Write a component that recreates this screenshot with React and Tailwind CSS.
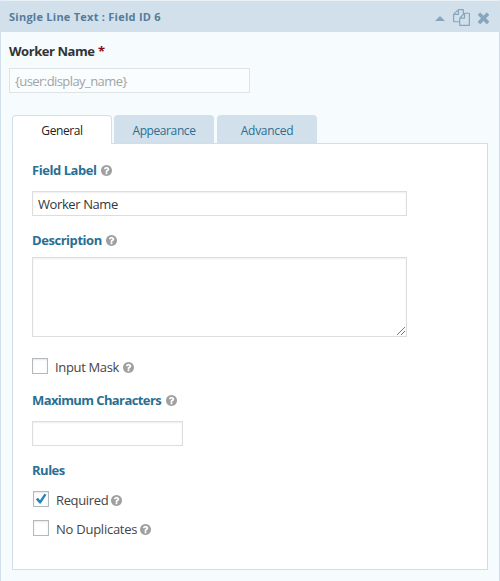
import React from "react";

function Help() {
  return (
    <svg viewBox="128 128 1536 1536" className="h-[11px] w-[11px] shrink-0 fill-[#a0a0a0]">
      <path d="M1024 1376v-192q0-14-9-23t-23-9h-192q-14 0-23 9t-9 23v192q0 14 9 23t23 9h192q14 0 23-9t9-23zm256-672q0-88-55.500-163t-138.500-116-170-41q-243 0-371 213-15 24 8 42l132 100q7 6 19 6 16 0 25-12 53-68 86-92 34-24 86-24 48 0 85.500 26t37.500 59q0 38-20 61t-68 45q-63 28-115.500 86.500t-52.500 125.500v36q0 14 9 23t23 9h192q14 0 23-9t9-23q0-19 21.500-49.500t54.500-49.500q32-18 49-28.500t46-35 44.500-48 28-60.500 12.500-81zm384 192q0 209-103 385.500t-279.500 279.500-385.500 103-385.500-103-279.500-279.500-103-385.500 103-385.500 279.500-279.500 385.500-103 385.500 103 279.500 279.500 103 385.500z" />
    </svg>
  );
}

function Heading({ children, help = true, className }) {
  return (
    <div className={"flex h-5 items-center text-[13px] font-bold text-[#2a6f92] " + className}>
      <span className="relative top-px w-full whitespace-nowrap">{children}</span>
      {help && <Help />}
    </div>
  );
}

function Check({ label, checked, className, labelClass }) {
  return (
    <div className={"flex h-4 items-center text-[13px] text-[#444] " + className}>
      <span className="flex h-4 w-4 shrink-0 items-center justify-center border border-[#b4b9be] bg-white shadow-[inset_0_1px_2px_rgba(0,0,0,0.1)]">
        {checked && (
          <svg viewBox="0 0 12 12" className="h-3 w-3 fill-[#2484b8]">
            <path d="M.8 6.200 3 4.800l2 2.400L9.400.8l2.100.9L5.800 10.400H4.400z" />
          </svg>
        )}
      </span>
      <span className={"relative top-[2px] whitespace-nowrap " + labelClass}>{label}</span>
      <span className="relative top-px"><Help /></span>
    </div>
  );
}

export default function App() {
  return (
    <div className="h-[581px] w-[500px] overflow-hidden border-x border-t border-x-[#d2e0eb] border-t-[#e9f1f7] bg-[#f6fbfe] font-['Open_Sans','Noto_Sans',sans-serif]">
      <header className="flex h-[31px] items-center bg-[#d2e0eb] pl-2">
        <h1 className="relative top-px w-[426px] whitespace-nowrap text-[11px] font-bold tracking-[0.25px] text-[#557b9b]">Single Line Text : Field ID 6</h1>
        <svg viewBox="0 0 10 5" className="mt-[3px] h-[5px] w-[10px] fill-[#88a5be]"><path d="M5 0 10 5H0z" /></svg>
        <svg viewBox="0 0 1792 1792" className="ml-2 mt-[2px] h-[17px] w-[17px] fill-[#88a5be]">
          <path d="M1696 384q40 0 68 28t28 68v1216q0 40-28 68t-68 28h-960q-40 0-68-28t-28-68v-288h-544q-40 0-68-28t-28-68v-672q0-40 20-88t48-76l408-408q28-28 76-48t88-20h416q40 0 68 28t28 68v328q68-40 128-40h416zm-544 213l-299 299h299v-299zm-640-384l-299 299h299v-299zm196 647l316-316v-416h-384v416q0 40-28 68t-68 28h-416v640h512v-256q0-40 20-88t48-76zm956 804v-1152h-384v416q0 40-28 68t-68 28h-416v640h896z" />
        </svg>
        <svg viewBox="302 302 1188 1252" className="ml-2 mt-[2px] h-3 w-[11px] fill-[#88a5be]" preserveAspectRatio="none">
          <path d="M1490 1322q0 40-28 68l-136 136q-28 28-68 28t-68-28l-294-294-294 294q-28 28-68 28t-68-28l-136-136q-28-28-28-68t28-68l294-294-294-294q-28-28-28-68t28-68l136-136q28-28 68-28t68 28l294 294 294-294q28-28 68-28t68 28l136 136q28 28 28 68t-28 68l-294 294 294 294q28 28 28 68z" />
        </svg>
      </header>

      <div className="mt-[10px] flex h-5 items-center pl-2 text-[13px] font-bold tracking-[-0.45px] text-[#333]">
        <span className="w-[89px]">Worker Name</span>
        <span className="text-[#8b0a1a]">*</span>
      </div>
      <div className="ml-2 mt-[6px] flex h-[25px] w-[241px] items-center border border-[#dfe3e5] bg-[#fafdfe] pl-[5px] pt-[3px] text-[13px] tracking-[-0.57px] text-[#a0a4a6]">
        {"{user:display_name}"}
      </div>

      <nav className="ml-[11px] mt-[22px] flex h-7 items-start text-[12px]">
        <div className="relative z-10 flex h-[29px] w-[100px] items-center justify-center rounded-t border border-b-0 border-[#d2e0eb] bg-white pt-[2px] tracking-[-0.4px] text-[#222]">General</div>
        <div className="ml-[2px] flex h-7 w-[100px] items-center justify-center rounded-t bg-[#d2e0eb] pt-[4px] tracking-[-0.4px] text-[#2a6f92]">Appearance</div>
        <div className="ml-[3px] flex h-7 w-[100px] items-center justify-center rounded-t bg-[#d2e0eb] pt-[4px] tracking-[-0.3px] text-[#2a6f92]">Advanced</div>
      </nav>
      <main className="ml-[11px] h-[427px] w-[476px] border border-[#d2dde5] bg-white pl-[19px] pt-4">
        <Heading className="w-20 tracking-[-0.45px]">Field Label</Heading>
        <div className="mt-[11px] flex h-[25px] w-[375px] items-center border border-[#ddd] pl-[5px] pt-[3px] text-[13px] tracking-[-0.4px] text-[#32373c] shadow-[inset_0_1px_2px_rgba(0,0,0,0.07)]">Worker Name</div>
        <Heading className="mt-[14px] w-[85px] tracking-[-0.45px]">Description</Heading>
        <div className="mt-[7px] flex h-20 w-[375px] items-end justify-end border border-[#ddd] p-px shadow-[inset_0_1px_2px_rgba(0,0,0,0.07)]">
          <svg viewBox="0 0 8 8" className="h-2 w-2 fill-none stroke-[#555]" strokeWidth=".8"><path d="M0 8 8 0M4 8 8 4" /></svg>
        </div>
        <Check className="mt-[21px]" label="Input Mask" labelClass="ml-[7px] w-[68px] tracking-[-0.35px]" />
        <Heading className="mt-4 w-[145px] tracking-[-0.6px]">Maximum Characters</Heading>
        <div className="mt-[11px] h-[25px] w-[151px] border border-[#ddd] shadow-[inset_0_1px_2px_rgba(0,0,0,0.07)]" />
        <Heading className="mt-[14px] tracking-[-0.5px]" help={false}>Rules</Heading>
        <Check className="ml-px mt-[11px]" label="Required" checked labelClass="ml-[7px] w-[55px] tracking-[-0.35px]" />
        <Check className="ml-px mt-[13px]" label="No Duplicates" labelClass="ml-[7px] w-[84px] tracking-[-0.25px]" />
      </main>
    </div>
  );
}
